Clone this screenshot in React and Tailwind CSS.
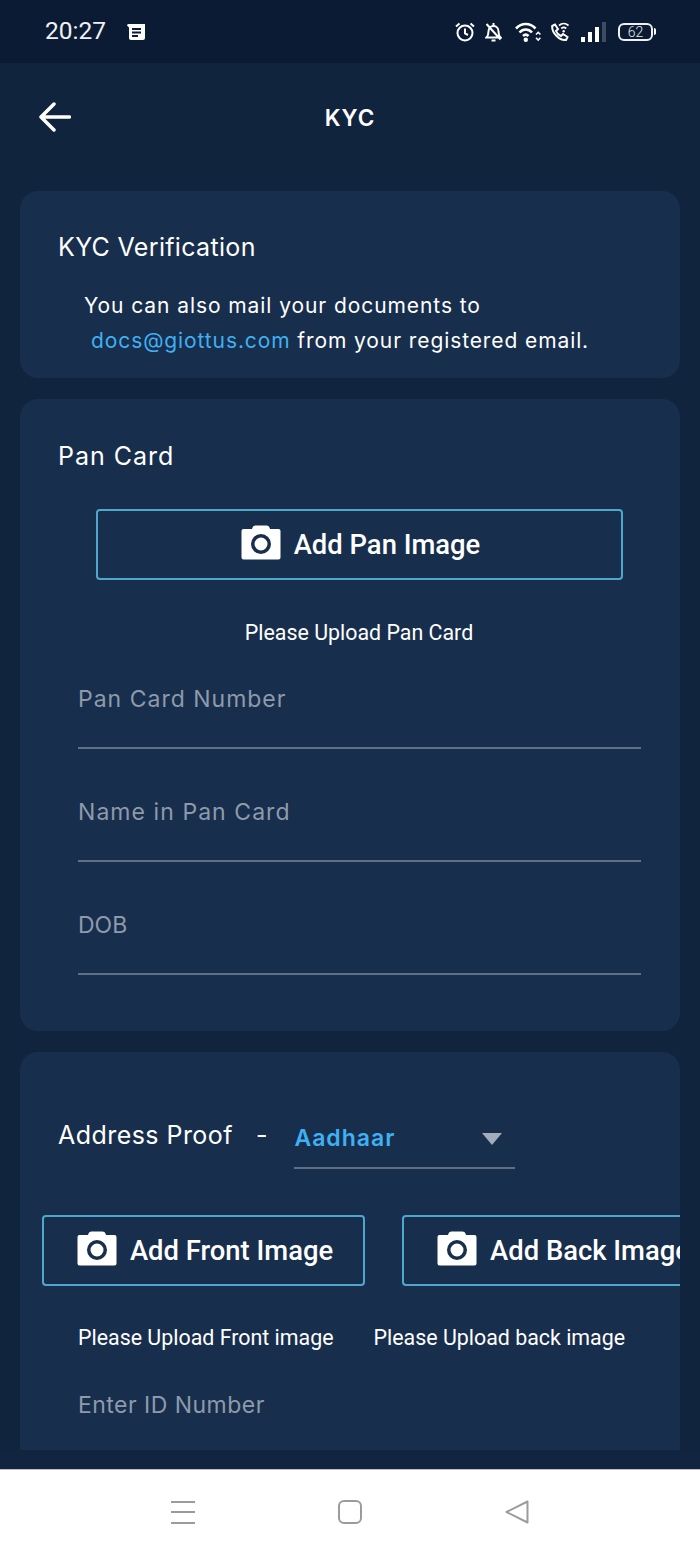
const poppins = "font-['Inter','Noto_Sans',sans-serif]";
const roboto = "font-['Roboto',sans-serif]";

function Camera({ className }) {
  return (
    <svg viewBox="0 0 40 35" className={className}>
      <path fill="#fff" fillRule="evenodd" d="M11.500 2.500 Q12.200 .5 14.500 .5 H25.500 Q27.800 .5 28.500 2.500 L29 4 H37.500 Q39.500 4 39.500 6 V32.500 Q39.500 34.500 37.500 34.500 H2.500 Q.5 34.500 .5 32.500 V6 Q.5 4 2.500 4 H11 Z M20 9 A10 10 0 1 0 20 29 A10 10 0 1 0 20 9 Z M20 12.500 A6.500 6.500 0 1 1 20 25.500 A6.500 6.500 0 1 1 20 12.500 Z" />
    </svg>
  );
}

function StatusIcons() {
  return (
    <div className="flex items-center text-white">
      <svg viewBox="0 0 20 20" className="w-[20px] h-[20px]" fill="none" stroke="#fff" strokeWidth="2">
        <circle cx="10" cy="11" r="7.500" />
        <path d="M10 6.500V11.500L13 13M1 4.500 4.500 1.500M19 4.500 15.500 1.500" />
      </svg>
      <svg viewBox="0 0 17 20" className="w-[17px] h-[20px] ml-[10px]" fill="none" stroke="#fff" strokeWidth="2">
        <path d="M1.500 15.500c1.500-1.500 2-3 2-6 0-3 2-5.500 5-5.500s5 2.500 5 5.500c0 3 .5 4.500 2 6zM6.500 18.500h4M1.500 2l14 15.500M8.500 1v3" />
      </svg>
      <svg viewBox="0 0 26 20" className="w-[26px] h-[20px] ml-[13px]" fill="none" stroke="#fff" strokeWidth="2.600">
        <path d="M1 6.500C6.500 .5 15 .5 20.500 6.500M4.500 10.500C8 6.500 13.500 6.500 17 10.500M8 14c1.800-1.700 3.700-1.700 5.500 0" />
        <circle cx="10.800" cy="17.800" r="2.200" fill="#fff" stroke="none" />
        <path d="M21 12.500l2.200-2.200 2.200 2.200M21 15.800l2.200 2.200 2.200-2.200" strokeWidth="1.600" />
      </svg>
      <svg viewBox="0 0 18 20" className="w-[18px] h-[20px] ml-[10px]" fill="none" stroke="#fff" strokeWidth="2">
        <path d="M1.200 4 4 2.500 7 7 5 9c1 2.500 2.500 4 5 5l2-2 4.500 3-1.500 3C8.500 19 .5 10.500 1.200 4Z" />
        <path d="M8 3.500c2.800-2.500 6.700-2.500 9.500 0M10.300 6.500c1.500-1.300 3.400-1.300 4.900 0" strokeWidth="1.700" />
        <circle cx="12.700" cy="9.300" r="1.200" fill="#fff" stroke="none" />
      </svg>
      <div className="flex items-end gap-[3px] h-[20px] ml-[12px]">
        <div className="w-[4px] h-[5px] bg-white" />
        <div className="w-[4px] h-[10px] bg-white" />
        <div className="w-[4px] h-[15px] bg-white" />
        <div className="w-[4px] h-[20px] bg-[#3d4c62]" />
      </div>
      <div className="flex items-center ml-[12px]">
        <div className={`w-[35px] h-[18px] rounded-[6px] border-2 border-[#eef1f5] flex items-center justify-center text-[14px] leading-none font-light text-[#e4e8ee] ${roboto}`}>62</div>
        <div className="w-[2px] h-[7px] bg-white ml-[1px] rounded-r-sm" />
      </div>
    </div>
  );
}

function UploadButton({ label, className }) {
  return (
    <div className={`h-[71px] shrink-0 flex items-center justify-center rounded-[4px] border-2 border-[#4fa8cc] ${className}`}>
      <Camera className="w-[40px] h-[35px] mr-[13px] mb-[5px]" />
      <span className={`${roboto} pt-[2px] text-[27.400px] font-medium text-white whitespace-nowrap leading-none`}>{label}</span>
    </div>
  );
}

function Field({ label, className }) {
  return (
    <div className="ml-[58px] mr-[39px] h-[113px] border-b-2 border-[#5f6f86] flex flex-col">
      <div className={`${poppins} mt-[46px] text-[23px] leading-[34px] text-[#8e9aab] ${className}`}>{label}</div>
    </div>
  );
}

export default function App() {
  return (
    <div className="w-[700px] h-[1555px] bg-[#10243e] flex flex-col overflow-hidden">
      <div className="h-[63px] shrink-0 bg-[#0b1b33] flex items-center justify-between pl-[45px] pr-[44px]">
        <div className="flex items-center">
          <span className={`${roboto} text-[24.500px] text-[#eef1f5] leading-none`}>20:27</span>
          <svg viewBox="0 0 18 16" className="w-[18px] h-[16px] ml-[21px]">
            <path fill="#fff" fillRule="evenodd" d="M0 1.500Q0 0 1.500 0H18V14Q18 16 16 16H4Q2 16 2 14V3.500Z M5 4H14V6H5Z M5 7.500H14V9.500H5Z M5 11H11V13H5Z" />
          </svg>
        </div>
        <StatusIcons />
      </div>

      <div className="h-[128px] shrink-0 relative flex items-center justify-center pb-[18px]">
        <svg viewBox="0 0 32 30" className="absolute left-[39px] top-[39px] w-[32px] h-[30px]" fill="none" stroke="#fff" strokeWidth="3.500" strokeLinecap="round" strokeLinejoin="round">
          <path d="M30.500 15H2.500M15 2 2 15 15 28" />
        </svg>
        <span className={`${poppins} text-[22.500px] font-semibold tracking-[1px] text-white leading-none`}>KYC</span>
      </div>

      <div className="flex-1 min-h-0 flex flex-col gap-[21px] px-[20px]">
        <section className="h-[187px] shrink-0 rounded-[18px] bg-[#182e4d] pt-[38px]">
          <h2 className={`${poppins} ml-[38px] text-[25px] leading-[36px] tracking-[0.330px] text-white`}>KYC Verification</h2>
          <p className={`${poppins} ml-[64px] mt-[23px] text-[21px] leading-[35px] tracking-[0.920px] text-white`}>You can also mail your documents to</p>
          <p className={`${poppins} ml-[71px] text-[21px] leading-[35px] tracking-[0.900px] text-white whitespace-nowrap`}>
            <span className="text-[#3fb1f2]">docs@giottus.com</span> from your registered email.
          </p>
        </section>

        <section className="h-[632px] shrink-0 rounded-[18px] bg-[#182e4d] pt-[39px]">
          <h2 className={`${poppins} ml-[38px] text-[25px] leading-[36px] tracking-[1px] text-white`}>Pan Card</h2>
          <UploadButton label="Add Pan Image" className="w-[527px] ml-[76px] mt-[35px] pl-[2px]" />
          <p className={`${roboto} mt-[38px] text-center text-[21.400px] leading-[30px] text-white pl-[18px]`}>Please Upload Pan Card</p>
          <div className="-mt-[12px]">
            <Field label="Pan Card Number" className="tracking-[1px]" />
            <Field label="Name in Pan Card" className="tracking-[1.060px]" />
            <Field label="DOB" />
          </div>
        </section>

        <section className="h-[398px] shrink-0 rounded-t-[18px] bg-[#182e4d] overflow-hidden pt-[63px]">
          <div className="flex items-start h-[54px]">
            <span className={`${poppins} ml-[38px] text-[25px] leading-[40px] tracking-[0.450px] text-white`}>Address Proof</span>
            <span className={`${poppins} ml-[23px] text-[25px] leading-[40px] text-white`}>-</span>
            <div className="ml-[27px] w-[221px] h-[54px] border-b-2 border-[#5f6f86] flex justify-between pr-[13px] pt-[6px]">
              <span className={`${poppins} text-[23px] font-semibold leading-[34px] tracking-[1px] text-[#3fb1f2]`}>Aadhaar</span>
              <svg viewBox="0 0 20 12" className="w-[20px] h-[12px] mt-[12px]"><path d="M0 0H20L10 12Z" fill="#a3acba" /></svg>
            </div>
          </div>
          <div className="flex gap-[37px] ml-[22px] mt-[46px]">
            <UploadButton label="Add Front Image" className="w-[323px] pl-[3px]" />
            <UploadButton label="Add Back Image" className="w-[323px]" />
          </div>
          <div className={`${roboto} flex mt-[37px] ml-[58px] text-[21.400px] leading-[30px] text-white whitespace-nowrap`}>
            <span>Please Upload Front image</span>
            <span className="ml-[40px]">Please Upload back image</span>
          </div>
          <div className={`${poppins} ml-[58px] mt-[35px] text-[23px] leading-[34px] tracking-[0.470px] text-[#8e9aab]`}>Enter ID Number</div>
        </section>
      </div>

      <div className="h-[19px] shrink-0 bg-[#122540]" />
      <nav className="h-[86px] shrink-0 bg-white border-t border-[#b9bec8] flex items-center justify-between pl-[171px] pr-[171px] pb-[2px]">
        <svg viewBox="0 0 24 24" className="w-[24px] h-[24px]" fill="none" stroke="#9b9b9b" strokeWidth="2">
          <path d="M0 2H24M0 12H24M0 23H24" />
        </svg>
        <svg viewBox="0 0 24 24" className="w-[24px] h-[24px]" fill="none" stroke="#9b9b9b" strokeWidth="2">
          <rect x="1" y="1" width="22" height="22" rx="5" />
        </svg>
        <svg viewBox="0 0 24 24" className="w-[24px] h-[24px]" fill="none" stroke="#9b9b9b" strokeWidth="2" strokeLinejoin="round">
          <path d="M22.500 1.500V22.500L1.500 12Z" />
        </svg>
      </nav>
    </div>
  );
}
